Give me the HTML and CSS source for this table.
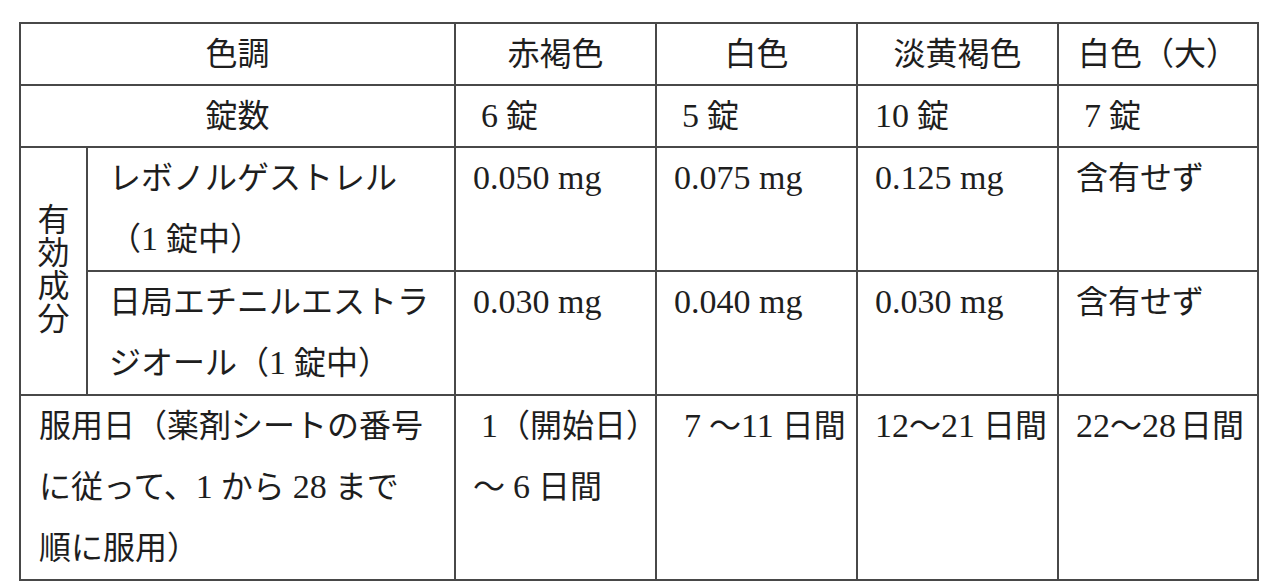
FILE: index.html
```html
<!DOCTYPE html>
<html lang="ja">
<head>
<meta charset="utf-8">
<title>服用表</title>
<link rel="stylesheet" href="styles.css">
</head>
<body>
<div class="page">
<table class="dose">
  <colgroup>
    <col class="c-side">
    <col class="c-name">
    <col class="c-val">
    <col class="c-val">
    <col class="c-val">
    <col class="c-last">
  </colgroup>
  <tr class="r1">
    <td colspan="2" class="center">色調</td>
    <td class="center">赤褐色</td>
    <td class="center">白色</td>
    <td class="center">淡黄褐色</td>
    <td class="center">白色（大）</td>
  </tr>
  <tr class="r1">
    <td colspan="2" class="center">錠数</td>
    <td><span class="ind"></span><span class="n">6</span> 錠</td>
    <td><span class="ind"></span><span class="n">5</span> 錠</td>
    <td><span class="n">10</span> 錠</td>
    <td><span class="ind"></span><span class="n">7</span> 錠</td>
  </tr>
  <tr>
    <td rowspan="2" class="side"><span class="vert">有効成分</span></td>
    <td class="name">レボノルゲストレル<br>（<span class="n">1</span> 錠中）</td>
    <td><span class="n">0.050 mg</span></td>
    <td><span class="n">0.075 mg</span></td>
    <td><span class="n">0.125 mg</span></td>
    <td>含有せず</td>
  </tr>
  <tr>
    <td class="name">日局エチニルエストラ<br>ジオール（<span class="n">1</span> 錠中）</td>
    <td><span class="n">0.030 mg</span></td>
    <td><span class="n">0.040 mg</span></td>
    <td><span class="n">0.030 mg</span></td>
    <td>含有せず</td>
  </tr>
  <tr class="r3">
    <td colspan="2" class="days">服用日（薬剤シートの番号<br>に従って、<span class="n">1</span> から <span class="n">28</span> まで<br>順に服用）</td>
    <td><span class="ind"></span><span class="n">1</span>（開始日）<br>～<span class="ind"></span><span class="n">6</span> 日間</td>
    <td><span class="ind2"></span><span class="n">7</span> ～<span class="n">11</span> 日間</td>
    <td><span class="n">12</span>～<span class="n">21</span> 日間</td>
    <td><span class="n">22</span>～<span class="n">28</span><span class="thin"></span>日間</td>
  </tr>
</table>
</div>
</body>
</html>
```
FILE: styles.css
```css
html, body {
  margin: 0;
  padding: 0;
  background: #ffffff;
}

.page {
  padding: 22px 0 0 19px;
}

.dose {
  border-collapse: collapse;
  table-layout: fixed;
  width: 1238px;
  font-family: "Liberation Serif", "Noto Sans CJK JP", serif;
  font-size: 32px;
  color: #1e1e1e;
}

.c-side { width: 67px; }
.c-name { width: 368px; }
.c-val { width: 201px; }
.c-last { width: 200px; }

.dose td {
  border: 2px solid #484848;
  padding: 0 4px 0 17px;
  line-height: 61px;
  vertical-align: top;
  white-space: nowrap;
}

.dose tr.r1 td {
  line-height: 60px;
}

.dose td.center {
  text-align: center;
  padding: 0;
}

.dose td.name {
  padding-left: 21px;
}

.dose td.days {
  padding-left: 18px;
}

.dose td.side {
  vertical-align: middle;
  text-align: center;
  padding: 0;
  line-height: 1;
}

.n {
  font-size: 34px;
  line-height: 1;
}

.thin {
  display: inline-block;
  width: 4px;
}

.vert {
  display: inline-block;
  writing-mode: vertical-rl;
  text-orientation: upright;
  font-family: "Noto Sans CJK JP", sans-serif;
  letter-spacing: 1px;
}

.ind {
  display: inline-block;
  width: 8px;
}

.ind2 {
  display: inline-block;
  width: 10px;
}
```
